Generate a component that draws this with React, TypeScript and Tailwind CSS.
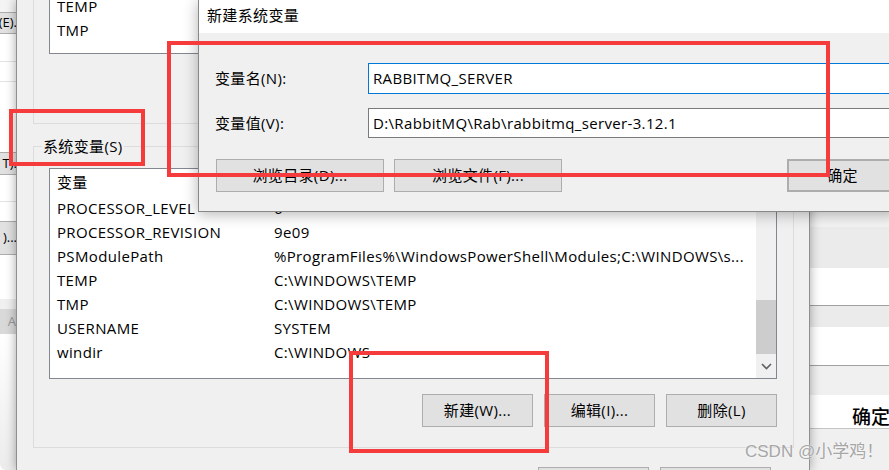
import type { ReactNode } from "react";

const systemVars: [string, string][] = [
  ["PROCESSOR_LEVEL", "6"],
  ["PROCESSOR_REVISION", "9e09"],
  ["PSModulePath", "%ProgramFiles%\\WindowsPowerShell\\Modules;C:\\WINDOWS\\s..."],
  ["TEMP", "C:\\WINDOWS\\TEMP"],
  ["TMP", "C:\\WINDOWS\\TEMP"],
  ["USERNAME", "SYSTEM"],
  ["windir", "C:\\WINDOWS"],
];

function WinButton({ children, className = "" }: { children: ReactNode; className?: string }) {
  return (
    <div
      className={`flex h-[33px] shrink-0 items-center justify-center border border-[#adadad] bg-[#e1e1e1] ${className}`}
    >
      {children}
    </div>
  );
}

function BackLeftWindow() {
  return (
    <div className="absolute left-0 top-0 z-0 flex h-[470px] w-[17px] flex-col overflow-hidden bg-white text-[13px] tracking-normal">
      <div className="h-[12px] bg-[#f4f4f4]" />
      <div className="flex h-[22px] items-center justify-end whitespace-nowrap border-y border-[#adadad] bg-[#e1e1e1]">
        (E).
      </div>
      <div className="h-[28px] border-b border-[#e3e3e3]" />
      <div className="h-[20px] border-b border-[#e3e3e3]" />
      <div className="h-[70px]" />
      <div className="flex h-[23px] items-center justify-end whitespace-nowrap border-y border-[#adadad] bg-[#e1e1e1]">
        T).
      </div>
      <div className="h-[27px] border-b border-[#e3e3e3]" />
      <div className="h-[19px]" />
      <div className="flex h-[34px] items-center justify-end whitespace-nowrap border-y border-[#adadad] bg-[#e1e1e1]">
        )...
      </div>
      <div className="h-[44px]" />
      <div className="h-[10px] bg-[#f0f0f0]" />
      <div className="flex h-[25px] items-center justify-end bg-[#d9d9d9] pr-[1px] text-[#999]">A</div>
      <div className="flex-1 rounded-bl-[6px] bg-gradient-to-b from-white to-[#ececec]" />
    </div>
  );
}

function BackRightWindow() {
  return (
    <div className="absolute left-[790px] top-0 z-0 flex h-[470px] w-[110px] flex-col bg-[#f0f0f0]">
      <div className="h-[227px] bg-[#f3f3f3]" />
      <div className="h-[41px] bg-[#ebebeb]" />
      <div className="h-[38px] border-b border-[#a0a0a0] bg-white" />
      <div className="h-[21px] bg-[#ebebeb]" />
      <div className="h-[39px] border-b border-[#a0a0a0] bg-white" />
      <div className="h-[29px] bg-[#f0f0f0]" />
      <div className="flex h-[34px] items-center border-b border-[#c4c4c4] bg-white pl-[62px] pt-[12px] text-[19px] font-medium tracking-normal">
        确定
      </div>
      <div className="flex-1 bg-[#f0f0f0]" />
    </div>
  );
}

function EnvDialog() {
  return (
    <div className="absolute left-[16px] top-0 z-10 h-[470px] w-[794px] border-x border-[#8f8f8f] bg-[#f0f0f0] shadow-[0_0_10px_rgba(0,0,0,0.35)]">
      <div className="ml-[16px] h-[124px] w-[761px] border-x border-b border-[#dcdcdc]">
        <div className="ml-[15px] h-[54px] w-[728px] overflow-hidden border-x border-b border-[#828790] bg-white">
          <div className="-mt-[6px]">
            {["TEMP", "TMP"].map((name) => (
              <div key={name} className="flex h-[24px] items-center pl-[7px]">
                {name}
              </div>
            ))}
          </div>
        </div>
      </div>

      <div className="relative ml-[16px] mt-[22px] h-[302px] w-[761px] border border-[#dcdcdc]">
        <span className="absolute -top-[11px] left-[8px] bg-[#f0f0f0] px-[1px] leading-[20px]">
          系统变量(S)
        </span>
        <div className="pl-[15px] pt-[21px]">
          <div className="flex h-[211px] w-[728px] overflow-hidden border border-[#828790] bg-white">
            <div className="min-w-0 flex-1">
              <div className="flex h-[27px] items-center pl-[7px]">
                <div className="w-[217px]">变量</div>
                <div>值</div>
              </div>
              {systemVars.map(([name, value]) => (
                <div key={name} className="flex h-[24px] items-center whitespace-nowrap pl-[7px]">
                  <div className="w-[217px] shrink-0">{name}</div>
                  <div className="overflow-hidden">{value}</div>
                </div>
              ))}
            </div>
            <div className="flex w-[20px] shrink-0 flex-col bg-[#f0f0f0]">
              <div className="h-[24px]" />
              <div className="flex flex-1 flex-col justify-end">
                <div className="h-[54px] bg-[#cdcdcd]" />
              </div>
              <div className="flex h-[24px] items-center justify-center">
                <svg width="11" height="7" viewBox="0 0 11 7" fill="none">
                  <path d="M1 1 L5.5 5.5 L10 1" stroke="#606060" strokeWidth="1.6" />
                </svg>
              </div>
            </div>
          </div>
          <div className="mt-[15px] flex w-[728px] justify-end gap-[11px]">
            <WinButton className="w-[111px]">新建(W)...</WinButton>
            <WinButton className="w-[111px]">编辑(I)...</WinButton>
            <WinButton className="w-[111px]">删除(L)</WinButton>
          </div>
        </div>
      </div>

      <div className="ml-[521px] mt-[19px] flex gap-[11px]">
        <WinButton className="w-[111px]">确定</WinButton>
        <WinButton className="w-[111px]">取消</WinButton>
      </div>
    </div>
  );
}

function NewVarDialog() {
  return (
    <div className="absolute left-[198px] top-0 z-20 w-[700px] border-b border-l border-[#888] shadow-[0_2px_14px_rgba(0,0,0,0.3)]">
      <div className="flex h-[33px] items-center bg-white pb-[2px] pl-[8px]">新建系统变量</div>
      <div className="h-[178px] bg-[#f0f0f0] pl-[16px] pt-[30px]">
        <div className="flex h-[31px] items-center">
          <div className="w-[153px] shrink-0">变量名(N):</div>
          <div className="flex h-[31px] w-[560px] items-center border border-[#0078d7] bg-white pl-[4px]">
            RABBITMQ_SERVER
          </div>
        </div>
        <div className="mt-[14px] flex h-[30px] items-center">
          <div className="w-[153px] shrink-0">变量值(V):</div>
          <div className="flex h-[30px] w-[560px] items-center border border-[#7a7a7a] bg-white pl-[4px]">
            D:\RabbitMQ\Rab\rabbitmq_server-3.12.1
          </div>
        </div>
        <div className="ml-[1px] mt-[21px] flex">
          <WinButton className="w-[168px]">浏览目录(D)...</WinButton>
          <WinButton className="ml-[10px] w-[168px]">浏览文件(F)...</WinButton>
          <WinButton className="ml-[225px] w-[111px] border-2 border-[#0078d7]">确定</WinButton>
        </div>
      </div>
    </div>
  );
}

export default function App() {
  return (
    <div className="relative h-[470px] w-[889px] overflow-hidden bg-[#f0f0f0] font-['Open_Sans','Noto_Sans_CJK_SC',sans-serif] text-[15px] tracking-[0.35px] text-black">
      <BackLeftWindow />
      <BackRightWindow />
      <EnvDialog />
      <NewVarDialog />

      <div className="pointer-events-none absolute left-[9px] top-[109px] z-40 h-[57px] w-[136px] border-[4px] border-[#f53b3b]" />
      <div className="pointer-events-none absolute left-[167px] top-[41px] z-40 h-[136px] w-[663px] border-[4px] border-[#f53b3b]" />
      <div className="pointer-events-none absolute left-[349px] top-[351px] z-40 h-[102px] w-[200px] border-[4px] border-[#f53b3b]" />

      <div className="pointer-events-none absolute left-[745px] top-[439px] z-30 whitespace-nowrap font-['Liberation_Sans','Noto_Sans_CJK_SC',sans-serif] text-[17px] tracking-normal text-[#a6a6a6] [text-shadow:0_0_2px_#fff]">
        CSDN @小学鸡！
      </div>
    </div>
  );
}
